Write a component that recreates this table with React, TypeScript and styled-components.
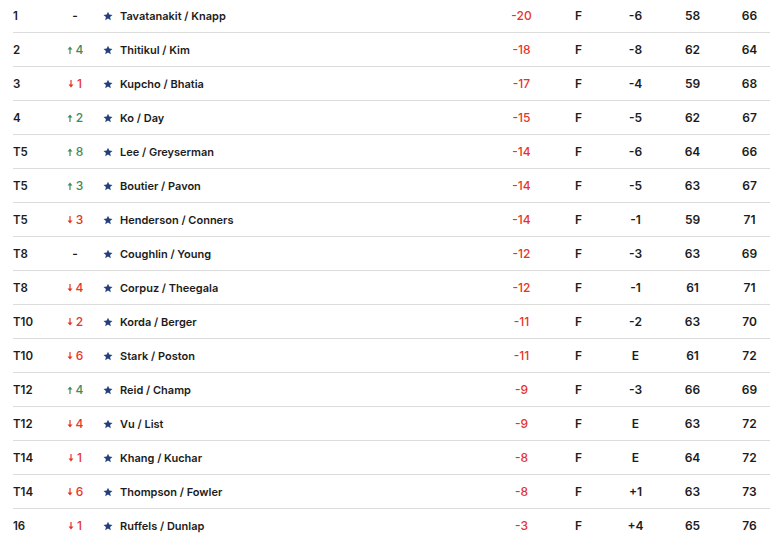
import React from "react";
import styled, { createGlobalStyle } from "styled-components";

const Global = createGlobalStyle`
  html, body { margin: 0; padding: 0; background: #fff; overflow: hidden; }
  body { font-family: Inter, "Liberation Sans", Arial, sans-serif; }
`;

type Move = { dir: "up" | "down" | "none"; n?: number };
type Row = {
  pos: string;
  move: Move;
  name: string;
  total: string;
  thru: string;
  today: string;
  r1: string;
  r2: string;
};

const rows: Row[] = [
  { pos: "1", move: { dir: "none" }, name: "Tavatanakit / Knapp", total: "-20", thru: "F", today: "-6", r1: "58", r2: "66" },
  { pos: "2", move: { dir: "up", n: 4 }, name: "Thitikul / Kim", total: "-18", thru: "F", today: "-8", r1: "62", r2: "64" },
  { pos: "3", move: { dir: "down", n: 1 }, name: "Kupcho / Bhatia", total: "-17", thru: "F", today: "-4", r1: "59", r2: "68" },
  { pos: "4", move: { dir: "up", n: 2 }, name: "Ko / Day", total: "-15", thru: "F", today: "-5", r1: "62", r2: "67" },
  { pos: "T5", move: { dir: "up", n: 8 }, name: "Lee / Greyserman", total: "-14", thru: "F", today: "-6", r1: "64", r2: "66" },
  { pos: "T5", move: { dir: "up", n: 3 }, name: "Boutier / Pavon", total: "-14", thru: "F", today: "-5", r1: "63", r2: "67" },
  { pos: "T5", move: { dir: "down", n: 3 }, name: "Henderson / Conners", total: "-14", thru: "F", today: "-1", r1: "59", r2: "71" },
  { pos: "T8", move: { dir: "none" }, name: "Coughlin / Young", total: "-12", thru: "F", today: "-3", r1: "63", r2: "69" },
  { pos: "T8", move: { dir: "down", n: 4 }, name: "Corpuz / Theegala", total: "-12", thru: "F", today: "-1", r1: "61", r2: "71" },
  { pos: "T10", move: { dir: "down", n: 2 }, name: "Korda / Berger", total: "-11", thru: "F", today: "-2", r1: "63", r2: "70" },
  { pos: "T10", move: { dir: "down", n: 6 }, name: "Stark / Poston", total: "-11", thru: "F", today: "E", r1: "61", r2: "72" },
  { pos: "T12", move: { dir: "up", n: 4 }, name: "Reid / Champ", total: "-9", thru: "F", today: "-3", r1: "66", r2: "69" },
  { pos: "T12", move: { dir: "down", n: 4 }, name: "Vu / List", total: "-9", thru: "F", today: "E", r1: "63", r2: "72" },
  { pos: "T14", move: { dir: "down", n: 1 }, name: "Khang / Kuchar", total: "-8", thru: "F", today: "E", r1: "64", r2: "72" },
  { pos: "T14", move: { dir: "down", n: 6 }, name: "Thompson / Fowler", total: "-8", thru: "F", today: "+1", r1: "63", r2: "73" },
  { pos: "16", move: { dir: "down", n: 1 }, name: "Ruffels / Dunlap", total: "-3", thru: "F", today: "+4", r1: "65", r2: "76" },
];

const Board = styled.div`
  margin-top: -1px;
  padding-left: 13px;
  width: 765px;
`;

const RowLine = styled.div`
  display: grid;
  grid-template-columns: 46px 32px 402px 57px 57px 57px 57px 57px;
  align-items: center;
  height: 33px;
  border-bottom: 1px solid #dcdcdc;
  font-size: 11px;
  font-weight: 600;
  color: #1c1c1c;
  &:last-child {
    border-bottom-color: transparent;
  }
`;

const Pos = styled.div`
  text-align: left;
  font-size: 11.5px;
`;

const MoveCell = styled.div<{ $dir: "up" | "down" | "none" }>`
  display: flex;
  align-items: center;
  justify-content: center;
  gap: 3px;
  font-size: 12px;
  color: ${(p) => (p.$dir === "up" ? "#3f8a5e" : p.$dir === "down" ? "#e5352b" : "#1c1c1c")};
  font-weight: ${(p) => (p.$dir === "none" ? 600 : 500)};
`;

const Player = styled.div`
  display: flex;
  align-items: center;
  gap: 7px;
  padding-left: 12px;
`;

const Num = styled.div<{ $red?: boolean }>`
  text-align: center;
  font-size: 12px;
  color: ${(p) => (p.$red ? "#e5352b" : "#1c1c1c")};
  font-weight: ${(p) => (p.$red ? 500 : 600)};
`;

const Arrow = ({ dir }: { dir: "up" | "down" }) => (
  <svg width="6" height="8" viewBox="0 0 6 8" style={{ transform: dir === "down" ? "rotate(180deg)" : undefined }}>
    <path d="M3 8V2.5" fill="none" stroke="currentColor" strokeWidth="1.2" />
    <path d="M0.5 3.6L3 0.6 5.5 3.6z" fill="currentColor" />
  </svg>
);

const Star = () => (
  <svg width="10" height="10" viewBox="0 0 24 24">
    <path
      d="M12 1.5l3.1 7.1 7.7.7-5.8 5.1 1.7 7.6L12 18l-6.7 4 1.7-7.6L1.2 9.3l7.7-.7z"
      fill="#24407c"
    />
  </svg>
);

export default function App() {
  return (
    <>
      <Global />
      <Board>
        {rows.map((r, i) => (
          <RowLine key={i}>
            <Pos>{r.pos}</Pos>
            <MoveCell $dir={r.move.dir}>
              {r.move.dir === "none" ? (
                "-"
              ) : (
                <>
                  <Arrow dir={r.move.dir} />
                  <span>{r.move.n}</span>
                </>
              )}
            </MoveCell>
            <Player>
              <Star />
              <span>{r.name}</span>
            </Player>
            <Num $red>{r.total}</Num>
            <Num>{r.thru}</Num>
            <Num>{r.today}</Num>
            <Num>{r.r1}</Num>
            <Num>{r.r2}</Num>
          </RowLine>
        ))}
      </Board>
    </>
  );
}
